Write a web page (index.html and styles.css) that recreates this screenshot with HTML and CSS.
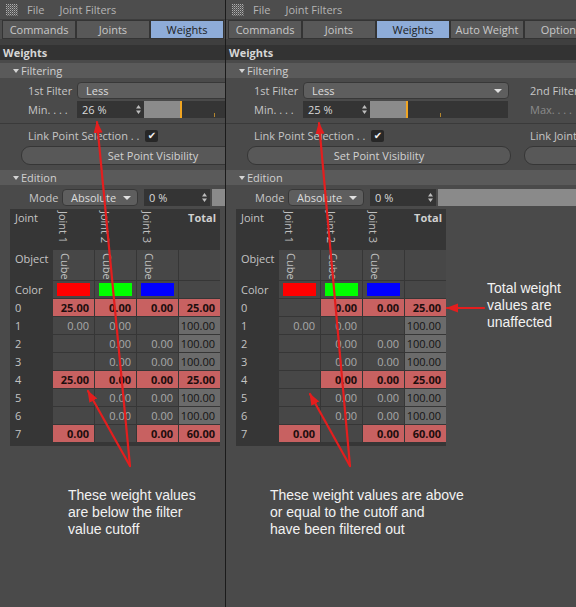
FILE: index.html
```html
<!DOCTYPE html>
<html>
<head>
<meta charset="utf-8">
<link rel="stylesheet" href="styles.css">
</head>
<body>
<div class="panel left">
  <div class="inner">
    <div class="menubar">
      <svg class="gridicon" width="12" height="12" viewBox="0 0 12 12"><defs><pattern id="dots1" width="2" height="2" patternUnits="userSpaceOnUse"><rect width="1" height="1" fill="#b0b0b0"/><rect x="1" y="1" width="1" height="1" fill="#7a7a7a"/></pattern></defs><rect width="12" height="12" fill="url(#dots1)"/></svg>
      <span class="menu">File</span><span class="menu">Joint Filters</span>
    </div>
    <div class="tabs">
      <div class="tab">Commands</div><div class="tab">Joints</div><div class="tab active">Weights</div>
    </div>
    <div class="band"></div>
    <div class="title">Weights</div>
    <div class="ghead"><span class="tri"></span>Filtering</div>
    <div class="row r1">
      <div class="half"><span class="lbl">1st Filter</span><div class="dropdown">Less</div></div>
    </div>
    <div class="row r2">
      <div class="half"><span class="lbl">Min. . . .</span><div class="num"><span>26 %</span><svg class="spin" width="5" height="9" viewBox="0 0 5 9"><path d="M2.5 0 L5 3.5 L0 3.5Z M2.5 9 L5 5.5 L0 5.5Z" fill="#bdbdbd"/></svg></div><div class="slider"><div class="fill"></div><div class="mark"></div><div class="gapx"></div><div class="tick"></div></div></div>
    </div>
    <div class="sep"></div>
    <div class="row r3">
      <div class="half"><span class="lbl long">Link Point Selection . .</span><span class="check">✔</span></div>
    </div>
    <div class="row r4">
      <div class="btn">Set Point Visibility</div>
    </div>
    <div class="ghead g2"><span class="tri"></span>Edition</div>
    <div class="row r5">
      <span class="lbl mlbl">Mode</span><div class="dropdown mode">Absolute</div><div class="num pct"><span>0 %</span><svg class="spin" width="5" height="9" viewBox="0 0 5 9"><path d="M2.5 0 L5 3.5 L0 3.5Z M2.5 9 L5 5.5 L0 5.5Z" fill="#bdbdbd"/></svg></div><div class="slider2"></div>
    </div>
    <div class="table">
      <div class="h lab">Joint</div><div class="h vh"><span>Joint 1</span></div><div class="h vh"><span>Joint 2</span></div><div class="h vh"><span>Joint 3</span></div><div class="h tot">Total</div>
      <div class="lab">Object</div><div class="c vo"><span>Cube</span></div><div class="c vo"><span>Cube</span></div><div class="c vo"><span>Cube</span></div><div class="c"></div>
      <div class="lab">Color</div><div class="c sw"><i class="red"></i></div><div class="c sw"><i class="green"></i></div><div class="c sw"><i class="blue"></i></div><div class="c"></div>
      <div class="lab">0</div><div class="r">25.00</div><div class="r">0.00</div><div class="r">0.00</div><div class="r">25.00</div>
      <div class="lab">1</div><div class="c">0.00</div><div class="c">0.00</div><div class="c"></div><div class="t">100.00</div>
      <div class="lab">2</div><div class="c"></div><div class="c">0.00</div><div class="c">0.00</div><div class="t">100.00</div>
      <div class="lab">3</div><div class="c"></div><div class="c">0.00</div><div class="c">0.00</div><div class="t">100.00</div>
      <div class="lab">4</div><div class="r">25.00</div><div class="r">0.00</div><div class="r">0.00</div><div class="r">25.00</div>
      <div class="lab">5</div><div class="c"></div><div class="c">0.00</div><div class="c">0.00</div><div class="t">100.00</div>
      <div class="lab">6</div><div class="c"></div><div class="c">0.00</div><div class="c">0.00</div><div class="t">100.00</div>
      <div class="lab">7</div><div class="r">0.00</div><div class="c"></div><div class="r">0.00</div><div class="r">60.00</div>
    </div>
  </div>
</div>
<div class="panel right">
  <div class="inner">
    <div class="menubar">
      <svg class="gridicon" width="12" height="12" viewBox="0 0 12 12"><defs><pattern id="dots2" width="2" height="2" patternUnits="userSpaceOnUse"><rect width="1" height="1" fill="#b0b0b0"/><rect x="1" y="1" width="1" height="1" fill="#7a7a7a"/></pattern></defs><rect width="12" height="12" fill="url(#dots2)"/></svg>
      <span class="menu">File</span><span class="menu">Joint Filters</span>
    </div>
    <div class="tabs">
      <div class="tab">Commands</div><div class="tab">Joints</div><div class="tab active">Weights</div><div class="tab">Auto Weight</div><div class="tab">Options</div>
    </div>
    <div class="band"></div>
    <div class="title">Weights</div>
    <div class="ghead"><span class="tri"></span>Filtering</div>
    <div class="row r1">
      <div class="half"><span class="lbl">1st Filter</span><div class="dropdown">Less</div></div>
      <div class="half half2"><span class="lbl">2nd Filter</span></div>
    </div>
    <div class="row r2">
      <div class="half"><span class="lbl">Min. . . .</span><div class="num"><span>25 %</span><svg class="spin" width="5" height="9" viewBox="0 0 5 9"><path d="M2.5 0 L5 3.5 L0 3.5Z M2.5 9 L5 5.5 L0 5.5Z" fill="#bdbdbd"/></svg></div><div class="slider"><div class="fill"></div><div class="mark"></div><div class="gapx"></div><div class="tick"></div></div></div>
      <div class="half half2 dim"><span class="lbl">Max. . . .</span></div>
    </div>
    <div class="sep"></div>
    <div class="row r3">
      <div class="half"><span class="lbl long">Link Point Selection . .</span><span class="check">✔</span></div>
      <div class="half half2"><span class="lbl long">Link Joint Selection . .</span></div>
    </div>
    <div class="row r4">
      <div class="btn">Set Point Visibility</div><div class="btn b2"></div>
    </div>
    <div class="ghead g2"><span class="tri"></span>Edition</div>
    <div class="row r5">
      <span class="lbl mlbl">Mode</span><div class="dropdown mode">Absolute</div><div class="num pct"><span>0 %</span><svg class="spin" width="5" height="9" viewBox="0 0 5 9"><path d="M2.5 0 L5 3.5 L0 3.5Z M2.5 9 L5 5.5 L0 5.5Z" fill="#bdbdbd"/></svg></div><div class="slider2"></div>
    </div>
    <div class="table">
      <div class="h lab">Joint</div><div class="h vh"><span>Joint 1</span></div><div class="h vh"><span>Joint 2</span></div><div class="h vh"><span>Joint 3</span></div><div class="h tot">Total</div>
      <div class="lab">Object</div><div class="c vo"><span>Cube</span></div><div class="c vo"><span>Cube</span></div><div class="c vo"><span>Cube</span></div><div class="c"></div>
      <div class="lab">Color</div><div class="c sw"><i class="red"></i></div><div class="c sw"><i class="green"></i></div><div class="c sw"><i class="blue"></i></div><div class="c"></div>
      <div class="lab">0</div><div class="c"></div><div class="r">0.00</div><div class="r">0.00</div><div class="r">25.00</div>
      <div class="lab">1</div><div class="c">0.00</div><div class="c">0.00</div><div class="c"></div><div class="t">100.00</div>
      <div class="lab">2</div><div class="c"></div><div class="c">0.00</div><div class="c">0.00</div><div class="t">100.00</div>
      <div class="lab">3</div><div class="c"></div><div class="c">0.00</div><div class="c">0.00</div><div class="t">100.00</div>
      <div class="lab">4</div><div class="c"></div><div class="r">0.00</div><div class="r">0.00</div><div class="r">25.00</div>
      <div class="lab">5</div><div class="c"></div><div class="c">0.00</div><div class="c">0.00</div><div class="t">100.00</div>
      <div class="lab">6</div><div class="c"></div><div class="c">0.00</div><div class="c">0.00</div><div class="t">100.00</div>
      <div class="lab">7</div><div class="r">0.00</div><div class="c"></div><div class="r">0.00</div><div class="r">60.00</div>
    </div>
  </div>
</div>

<div class="annot">
  <svg class="arrows" width="576" height="607" viewBox="0 0 576 607">
    <defs>
      <marker id="ah" markerUnits="userSpaceOnUse" markerWidth="12" markerHeight="10" refX="11" refY="4.5" orient="auto">
        <path d="M0 0 L12 4.5 L0 9 Z" fill="#e41e1e"/>
      </marker>
    </defs>
    <g stroke="#e41e1e" stroke-width="2.2" fill="none" stroke-linecap="round">
      <line x1="130" y1="466" x2="97" y2="122" marker-end="url(#ah)"/>
      <line x1="130" y1="466" x2="88" y2="391" marker-end="url(#ah)"/>
      <line x1="350" y1="466" x2="319" y2="123" marker-end="url(#ah)"/>
      <line x1="350" y1="466" x2="310" y2="394" marker-end="url(#ah)"/>
      <line x1="484" y1="308" x2="447" y2="308" marker-end="url(#ah)"/>
    </g>
  </svg>
  <p class="note n1">These weight values<br>are below the filter<br>value cutoff</p>
  <p class="note n2">These weight values are above<br>or equal to the cutoff and<br>have been filtered out</p>
  <p class="note n3">Total weight<br>values are<br>unaffected</p>
</div>
</body>
</html>
```

FILE: styles.css
```css
* { box-sizing: border-box; }
html, body { margin: 0; padding: 0; }
body {
  width: 576px;
  height: 607px;
  overflow: hidden;
  position: relative;
  display: flex;
  background: #4a4a4a;
  font-family: "Open Sans", "DejaVu Sans", sans-serif;
  font-size: 11px;
  color: #c6c6c6;
}
.panel {
  flex: none;
  height: 607px;
  overflow: hidden;
  background: #4a4a4a;
}
.panel.left { width: 226px; border-right: 1px solid #1b1b1b; }
.panel.right { width: 350px; }
.inner { width: 620px; }

.menubar {
  height: 20px;
  display: flex;
  align-items: center;
  padding-left: 6px;
  border-bottom: 1px solid #3d3d3d;
  background: #4d4d4d;
  color: #b4b4b4;
}
.gridicon { flex: none; margin-right: 9px; }
.menu { margin-right: 15px; }

.tabs { display: flex; height: 19px; padding-left: 2px; background: #4d4d4d; }
.tab {
  flex: none;
  width: 74px;
  height: 19px;
  border: 1px solid #343434;
  background: #585858;
  color: #c8c8c8;
  text-align: center;
  line-height: 17px;
  white-space: nowrap;
}
.tab.active { background: #8eacd8; color: #1c1c1c; }

.band { height: 6px; background: #3f3f3f; }
.title {
  height: 15px;
  background: #333333;
  color: #d6d6d6;
  font-weight: bold;
  line-height: 15px;
  padding-left: 3px;
}
.ghead {
  margin-top: 3px;
  height: 15px;
  background: #5a5a5a;
  color: #d0d0d0;
  display: flex;
  align-items: center;
  padding-left: 13px;
}
.ghead.g2 { margin-top: 5px; }
.tri {
  width: 0; height: 0;
  border-left: 3.5px solid transparent;
  border-right: 3.5px solid transparent;
  border-top: 4px solid #d4d4d4;
  margin-right: 2px;
}

.row { display: flex; align-items: center; height: 17px; margin-top: 4px; }
.row.r2 { margin-top: 2px; }
.row.r3 { height: 15px; margin-top: 4px; }
.row.r4 { height: 19px; margin-top: 3px; }
.row.r5 { margin-top: 4px; }

.half { flex: none; width: 290px; display: flex; align-items: center; }
.half2 { margin-left: 8px; }
.lbl { flex: none; width: 77px; padding-left: 28px; white-space: nowrap; }
.half2 .lbl { padding-left: 6px; }
.lbl.long { width: auto; }
.dim { color: #8a8a8a; }

.dropdown {
  flex: none;
  position: relative;
  width: 206px;
  height: 17px;
  border: 1px solid #383838;
  border-radius: 4px;
  background: #5e5e5e;
  color: #dcdcdc;
  padding-left: 8px;
  line-height: 15px;
}
.dropdown::after {
  content: "";
  position: absolute;
  right: 6px;
  top: 6px;
  border-left: 4px solid transparent;
  border-right: 4px solid transparent;
  border-top: 4px solid #e0e0e0;
}
.num {
  flex: none;
  width: 67px;
  height: 17px;
  background: #343434;
  color: #dadada;
  display: flex;
  align-items: center;
  justify-content: space-between;
  padding: 0 3px 0 5px;
}
.spin { flex: none; }
.slider {
  flex: none;
  width: 138px;
  height: 17px;
  background: #353535;
  display: flex;
}
.fill { width: 36px; background: #8b8b8b; }
.mark { width: 2px; background: #f0a522; }
.gapx { width: 32px; }
.tick { width: 1px; height: 4px; align-self: flex-end; margin-bottom: 1px; background: #b3862e; }

.sep { margin-top: 5px; height: 1px; background: #3a3a3a; }
.check {
  flex: none;
  width: 13px;
  height: 12px;
  margin-left: 6px;
  border-radius: 2px;
  background: #272727;
  color: #f2f2f2;
  font-size: 10px;
  line-height: 12px;
  text-align: center;
  font-family: "DejaVu Sans", sans-serif;
}

.btn {
  flex: none;
  width: 264px;
  height: 19px;
  margin-left: 21px;
  border: 1px solid #363636;
  border-radius: 9px;
  background: #585858;
  color: #d2d2d2;
  text-align: center;
  line-height: 17px;
}
.btn.b2 { margin-left: 13px; }

.mlbl { width: 62px; padding-left: 29px; }
.dropdown.mode { width: 76px; padding-left: 8px; }
.num.pct { width: 66px; margin-left: 6px; }
.slider2 { flex: none; width: 300px; height: 17px; margin-left: 2px; background: #8a8a8a; }

.table {
  margin-top: 3px;
  margin-left: 10px;
  width: 210px;
  display: grid;
  grid-template-columns: 42px repeat(4, 41px);
  grid-template-rows: 40px 30px 17px repeat(8, 17px);
  gap: 1px;
  background: #363636;
  padding-bottom: 4px;
}
.table > div {
  font-size: 11px;
  line-height: 17px;
  white-space: nowrap;
  overflow: hidden;
}
.lab { background: #363636; color: #c4c4c4; padding-left: 5px; }
.h { background: #363636; color: #c4c4c4; }
.c { background: #474747; color: #a9a9a9; text-align: right; padding-right: 5px; }
.vh, .vo { text-align: left; padding-left: 3px; padding-top: 2px; }
.vh span, .vo span {
  display: inline-block;
  writing-mode: vertical-rl;
  line-height: 14px;
  color: #c0c0c0;
}
.vo { padding-left: 5px; padding-top: 3px; }
.tot { font-weight: bold; text-align: right; padding-right: 4px; color: #d0d0d0; }
.r { background: #c86161; color: #1e0e0e; font-weight: bold; text-align: right; padding-right: 5px; }
.t { background: #6b6b6b; color: #141414; text-align: right; padding-right: 5px; }
.sw { display: flex; align-items: center; justify-content: center; padding: 0 !important; }
.sw i { display: block; width: 33px; height: 13px; }
.sw .red { background: #ff0000; }
.sw .green { background: #00ff00; }
.sw .blue { background: #0000ff; }

.annot {
  position: absolute;
  left: 0;
  top: 0;
  width: 576px;
  height: 607px;
  pointer-events: none;
}
.arrows { position: absolute; left: 0; top: 0; }
.note {
  position: absolute;
  margin: 0;
  font-family: "Liberation Sans", Arial, sans-serif;
  font-size: 14px;
  line-height: 17px;
  color: #f2f2f2;
  white-space: nowrap;
}
.n1 { left: 68px; top: 487px; }
.n2 { left: 270px; top: 487px; }
.n3 { left: 487px; top: 280px; }
```
